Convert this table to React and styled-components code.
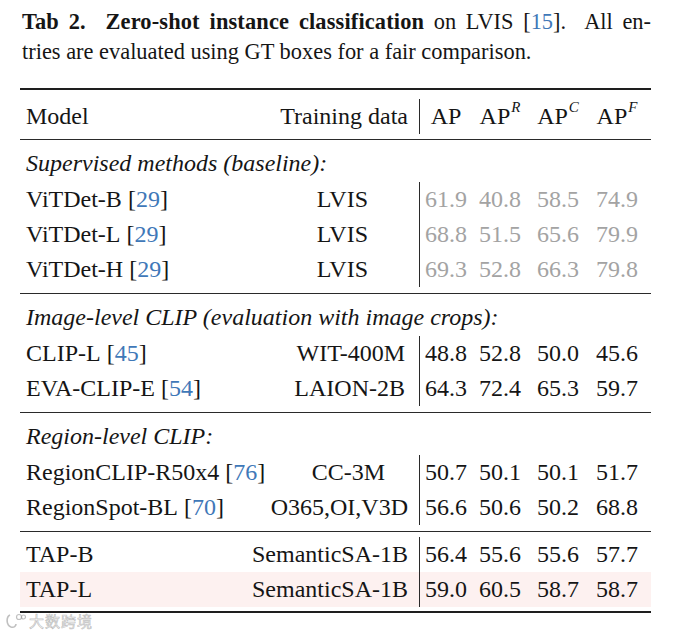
import React from 'react'
import styled, { createGlobalStyle } from 'styled-components'

const GlobalStyle = createGlobalStyle`
  html, body {
    margin: 0;
    padding: 0;
    background: #ffffff;
  }
  body {
    font-family: "Liberation Serif", "Times New Roman", serif;
    color: #151515;
  }
`

const Page = styled.div`
  position: relative;
  width: 673px;
  height: 631px;
  padding: 7px 22px 0 20px;
  box-sizing: border-box;
`

const Caption = styled.div`
  font-size: 22.4px;
  line-height: 30px;
  padding-left: 2px;
`

const CaptionLine = styled.div`
  text-align: ${(p) => (p.$justify ? 'justify' : 'left')};
  text-align-last: ${(p) => (p.$justify ? 'justify' : 'left')};
  white-space: nowrap;
`

const Bold = styled.b`
  letter-spacing: 0.15px;
`

const Cite = styled.span`
  color: #3f78b8;
`

const Table = styled.div`
  margin-top: 21px;
  border-top: 2px solid #1e1e1e;
  border-bottom: 2px solid #1e1e1e;
  font-size: 24px;
`

const Group = styled.div`
  padding: ${(p) => p.$pad || '5px 0 6px'};
  border-top: ${(p) => (p.$first ? 'none' : '1.5px solid #2a2a2a')};
`

const Row = styled.div`
  display: grid;
  grid-template-columns: 1fr auto 52px 56px 60px 58px;
  height: 35px;
  align-items: stretch;
  padding-right: 5px;
  background: ${(p) => (p.$highlight ? '#fdf1f0' : 'transparent')};
`

const Cell = styled.div`
  display: flex;
  align-items: center;
  white-space: nowrap;
`

const ModelCell = styled(Cell)`
  padding-left: 6px;
`

const DataCell = styled(Cell)`
  justify-content: flex-end;
  padding-right: ${(p) => 11 + (p.$inset || 0)}px;
  border-right: 1.5px solid #2a2a2a;
`

const Num = styled(Cell)`
  justify-content: center;
  color: ${(p) => (p.$muted ? '#a3a3a3' : '#151515')};
`

const Section = styled.div`
  height: 37px;
  display: flex;
  align-items: center;
  padding-left: 6px;
  font-style: italic;
`

const Sup = styled.span`
  font-size: 15px;
  font-style: italic;
  position: relative;
  top: -9px;
  margin-left: 1px;
`

const Watermark = styled.div`
  position: absolute;
  left: 4px;
  top: 610px;
  display: flex;
  align-items: center;
  gap: 3px;
  font-family: "Noto Sans CJK SC", sans-serif;
  font-size: 15px;
  color: rgba(255, 255, 255, 0.85);
  -webkit-text-stroke: 0.7px rgba(150, 150, 150, 0.6);
  letter-spacing: 1px;
`

const groups = [
  {
    title: 'Supervised methods (baseline):',
    rows: [
      { model: 'ViTDet-B', cite: '29', data: 'LVIS', inset: 40, nums: ['61.9', '40.8', '58.5', '74.9'], muted: true },
      { model: 'ViTDet-L', cite: '29', data: 'LVIS', inset: 40, nums: ['68.8', '51.5', '65.6', '79.9'], muted: true },
      { model: 'ViTDet-H', cite: '29', data: 'LVIS', inset: 40, nums: ['69.3', '52.8', '66.3', '79.8'], muted: true },
    ],
  },
  {
    title: 'Image-level CLIP (evaluation with image crops):',
    rows: [
      { model: 'CLIP-L', cite: '45', data: 'WIT-400M', inset: 3, nums: ['48.8', '52.8', '50.0', '45.6'] },
      { model: 'EVA-CLIP-E', cite: '54', data: 'LAION-2B', inset: 3, nums: ['64.3', '72.4', '65.3', '59.7'] },
    ],
  },
  {
    title: 'Region-level CLIP:',
    rows: [
      { model: 'RegionCLIP-R50x4', cite: '76', data: 'CC-3M', inset: 23, nums: ['50.7', '50.1', '50.1', '51.7'] },
      { model: 'RegionSpot-BL', cite: '70', data: 'O365,OI,V3D', inset: 0, nums: ['56.6', '50.6', '50.2', '68.8'] },
    ],
  },
  {
    rows: [
      { model: 'TAP-B', data: 'SemanticSA-1B', inset: 0, nums: ['56.4', '55.6', '55.6', '57.7'] },
      { model: 'TAP-L', data: 'SemanticSA-1B', inset: 0, nums: ['59.0', '60.5', '58.7', '58.7'], highlight: true },
    ],
  },
]

const DataRow = ({ row }) => (
  <Row $highlight={row.highlight}>
    <ModelCell>
      {row.model}
      {row.cite && (
        <>
          &nbsp;[<Cite>{row.cite}</Cite>]
        </>
      )}
    </ModelCell>
    <DataCell $inset={row.inset}>{row.data}</DataCell>
    {row.nums.map((n, i) => (
      <Num key={i} $muted={row.muted}>
        {n}
      </Num>
    ))}
  </Row>
)

const App = () => {
  return (
    <>
      <GlobalStyle />
      <Page>
        <Caption>
          <CaptionLine $justify>
            <Bold>Tab 2.&nbsp; Zero-shot instance classification</Bold> on LVIS [<Cite>15</Cite>].&nbsp; All en-
          </CaptionLine>
          <CaptionLine>tries are evaluated using GT boxes for a fair comparison.</CaptionLine>
        </Caption>

        <Table>
          <Group $first $pad="9px 0 5px">
            <Row>
              <ModelCell>Model</ModelCell>
              <DataCell>Training data</DataCell>
              <Num>AP</Num>
              <Num>
                AP<Sup>R</Sup>
              </Num>
              <Num>
                AP<Sup>C</Sup>
              </Num>
              <Num>
                AP<Sup>F</Sup>
              </Num>
            </Row>
          </Group>

          {groups.map((g, gi) => (
            <Group key={gi} $pad={g.title ? '5px 0 6px' : '5px 0 4px'}>
              {g.title && <Section>{g.title}</Section>}
              {g.rows.map((r) => (
                <DataRow key={r.model} row={r} />
              ))}
            </Group>
          ))}
        </Table>

        <Watermark>
          <svg width="22" height="18" viewBox="0 0 22 18">
            <path
              d="M6 3 C2 5 2 13 7 15 C10 16 12 14 12 12"
              fill="none"
              stroke="rgba(150,150,150,0.6)"
              strokeWidth="1.6"
            />
            <circle cx="15" cy="5" r="2.5" fill="none" stroke="rgba(150,150,150,0.6)" strokeWidth="1.2" />
            <circle cx="19.5" cy="5" r="2" fill="none" stroke="rgba(150,150,150,0.6)" strokeWidth="1.2" />
          </svg>
          大数跨境
        </Watermark>
      </Page>
    </>
  )
}

export default App
